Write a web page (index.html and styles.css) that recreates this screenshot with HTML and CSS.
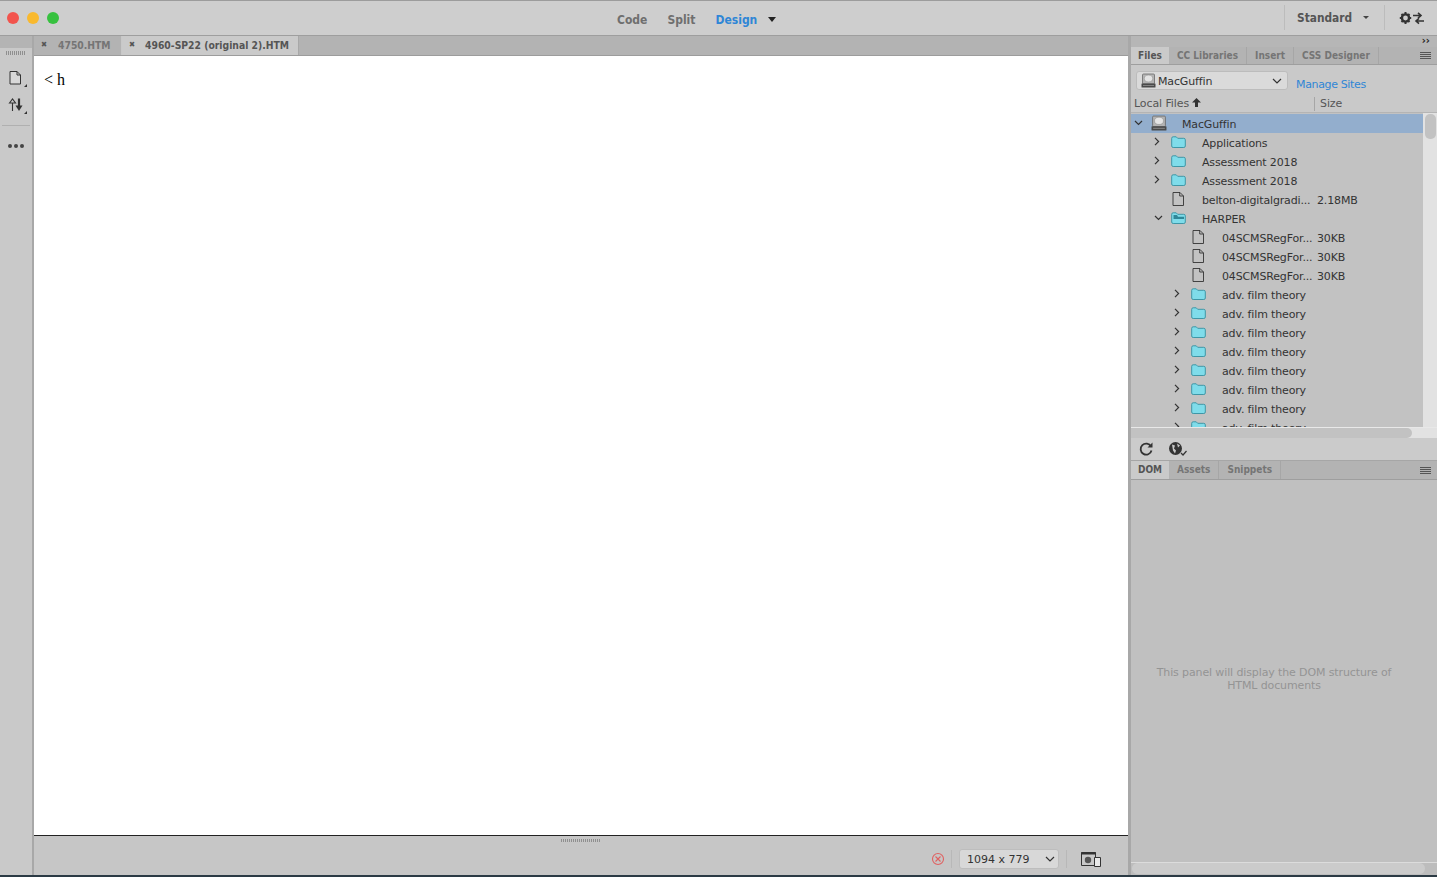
FILE: index.html
```html
<!DOCTYPE html>
<html lang="en">
<head>
<meta charset="utf-8">
<title>Dreamweaver</title>
<link rel="stylesheet" href="styles.css">
</head>
<body>
<svg class="defs" width="0" height="0">
  <symbol id="chev-r" viewBox="0 0 6 9"><path d="M1 .8l3.600 3.700L1 8.200" fill="none" stroke="#333" stroke-width="1.200"/></symbol>
  <symbol id="chev-d" viewBox="0 0 9 6"><path d="M1 1l3.500 3.500L8 1" fill="none" stroke="#333" stroke-width="1.200"/></symbol>
  <symbol id="folder" viewBox="0 0 15 12"><path d="M.7 2.300Q.7 .8 2.200 .8h3L6.700 2.300h6Q14.300 2.300 14.300 3.800v6.200q0 1.500-1.500 1.500H2.200Q.7 11.500 .7 10z" fill="#7fdcea" stroke="#3f96a6"/></symbol>
  <symbol id="folder-open" viewBox="0 0 15 12"><path d="M.7 2.300Q.7 .8 2.200 .8h3L6.700 2.300h6Q14.300 2.300 14.300 3.800v6.200q0 1.500-1.500 1.500H2.200Q.7 11.500 .7 10z" fill="#7fdcea" stroke="#3f96a6"/><path d="M2.500 3h3.500l1 1.700h6V7H2.500z" fill="#2f8798"/></symbol>
  <symbol id="doc" viewBox="0 0 13 14"><path d="M1 .5h7l3.500 3.500v9.500H1z" fill="none" stroke="#333" stroke-width=".9"/><path d="M7.700 .5V4h3.800" fill="none" stroke="#333" stroke-width=".9"/></symbol>
  <symbol id="drive" viewBox="0 0 15 15"><rect x="1.500" y="1" width="12" height="10" rx="1" fill="#b4b4b4" stroke="#6a6a6a" stroke-width=".8"/><ellipse cx="7.500" cy="5.500" rx="4.200" ry="3.400" fill="#e4e4e4" stroke="#8a8a8a" stroke-width=".5"/><rect x=".5" y="10.500" width="14" height="4" rx=".5" fill="#4a4a4a"/><path d="M2 12.500h11" stroke="#aaa" stroke-width=".6"/></symbol>
</svg>
<div class="app">
  <header class="titlebar">
    <div class="lights"><span class="light red"></span><span class="light yellow"></span><span class="light green"></span></div>
    <nav class="views">
      <span class="view">Code</span>
      <span class="view">Split</span>
      <span class="view active">Design</span>
      <span class="caret-down"></span>
    </nav>
    <div class="workspace">
      <span class="ws-label">Standard</span>
      <span class="ws-caret"></span>
    </div>
    <div class="ws-sync">
      <svg width="26" height="14" viewBox="0 0 26 14"><circle cx="6.500" cy="7" r="3.600" fill="none" stroke="#333" stroke-width="2.400"/><path d="M6.500 1v2.500M6.500 10.500V13M.8 7h2.500M9.700 7h2.500M2.500 3l1.700 1.700M8.800 9.300l1.700 1.700M2.500 11l1.700-1.700M8.800 4.700L10.500 3" stroke="#333" stroke-width="2"/><path d="M14 4.500h7.500M19 1.800l3 2.700-3 2.700" fill="none" stroke="#333" stroke-width="1.600"/><path d="M25 10h-7M20 7.300l-3 2.700 3 2.700" fill="none" stroke="#333" stroke-width="1.600"/></svg>
    </div>
  </header>
  <div class="main">
    <aside class="toolbar">
      <div class="toolbar-top"></div>
      <div class="grip"></div>
      <div class="tool tool-file">
        <svg width="13" height="14" viewBox="0 0 13 14"><path d="M1 .5h7l3.500 3.500v9H1z" fill="#d8d8d8" stroke="#333"/><path d="M8 .5V4h3.500" fill="none" stroke="#333"/></svg>
        <span class="corner"></span>
      </div>
      <div class="tool tool-arrows">
        <svg width="16" height="16" viewBox="0 0 16 16"><path d="M4.500 14V5.500M1.500 6l3-4 3 4z" fill="none" stroke="#333" stroke-width="1.100"/><path d="M11 1.500V9" stroke="#333" stroke-width="2.200"/><path d="M7.500 8.500h7L11 14z" fill="#333"/></svg>
        <span class="corner"></span>
      </div>
      <div class="tool-sep"></div>
      <div class="tool tool-more"><i class="dot"></i><i class="dot"></i><i class="dot"></i></div>
    </aside>
    <section class="doc-area">
      <div class="tabs">
        <div class="tab"><span class="tab-x">✖</span>4750.HTM</div>
        <div class="tab current"><span class="tab-x">✖</span>4960-SP22 (original 2).HTM</div>
      </div>
      <div class="page"><p class="page-text">&lt; h</p></div>
      <div class="statusbar">
        <div class="status-grip"></div>
        <svg class="err" width="14" height="14" viewBox="0 0 14 14"><circle cx="7" cy="7" r="5.500" fill="none" stroke="#e06060" stroke-width="1.100"/><path d="M4.500 4.500l5 5M9.500 4.500l-5 5" stroke="#e06060" stroke-width="1.100"/></svg>
        <span class="status-sep"></span>
        <div class="size-select"><span>1094 x 779</span><svg width="10" height="6" viewBox="0 0 10 6"><path d="M1 1l4 4 4-4" fill="none" stroke="#333" stroke-width="1.200"/></svg></div>
        <span class="status-sep"></span>
        <svg class="preview" width="20" height="16" viewBox="0 0 20 16"><path d="M.5 1.500h14v13H.5z" fill="#c8c8c8" stroke="#333"/><path d="M.5 1h14v2.500H.5z" fill="#333"/><circle cx="7" cy="9" r="3.200" fill="#555"/><path d="M13.500 6.500h6v9h-6z" fill="#e8e8e8" stroke="#333"/></svg>
      </div>
    </section>
    <aside class="panels">
      <div class="collapse-bar"><span class="chev">››</span></div>
      <div class="panel-tabs">
        <span class="ptab current files-tab">Files</span>
        <span class="ptab">CC Libraries</span>
        <span class="ptab">Insert</span>
        <span class="ptab">CSS Designer</span>
        <span class="menu-lines"><i></i><i></i><i></i><i></i></span>
      </div>
      <div class="site-row">
        <div class="site-select">
          <svg class="drive" width="15" height="15"><use href="#drive"/></svg>
          <span class="site-name">MacGuffin</span>
          <svg class="site-chev" width="10" height="6" viewBox="0 0 10 6"><path d="M1 1l4 4 4-4" fill="none" stroke="#333" stroke-width="1.200"/></svg>
        </div>
        <a class="manage">Manage Sites</a>
      </div>
      <div class="file-head">
        <span class="col-local">Local Files <svg class="up" width="9" height="9" viewBox="0 0 9 9"><path d="M4.500 0L9 4.500H6V9H3V4.500H0z" fill="#333"/></svg></span>
        <span class="col-size">Size</span>
      </div>
      <div class="tree-wrap">
        <div class="tree">
          <div class="row level-0 selected"><span class="arrow"><svg width="9" height="6"><use href="#chev-d"/></svg></span><span class="icon"><svg class="drive-big" width="16" height="16"><use href="#drive"/></svg></span><span class="name">MacGuffin</span></div>
          <div class="row level-1"><span class="arrow"><svg width="6" height="9"><use href="#chev-r"/></svg></span><span class="icon"><svg width="15" height="12"><use href="#folder"/></svg></span><span class="name">Applications</span></div>
          <div class="row level-1"><span class="arrow"><svg width="6" height="9"><use href="#chev-r"/></svg></span><span class="icon"><svg width="15" height="12"><use href="#folder"/></svg></span><span class="name">Assessment 2018</span></div>
          <div class="row level-1"><span class="arrow"><svg width="6" height="9"><use href="#chev-r"/></svg></span><span class="icon"><svg width="15" height="12"><use href="#folder"/></svg></span><span class="name">Assessment 2018</span></div>
          <div class="row level-1"><span class="arrow"></span><span class="icon"><svg class="doc" width="13" height="14"><use href="#doc"/></svg></span><span class="name">belton-digitalgradi...</span><span class="size">2.18MB</span></div>
          <div class="row level-1"><span class="arrow"><svg class="open" width="9" height="6"><use href="#chev-d"/></svg></span><span class="icon"><svg width="15" height="12"><use href="#folder-open"/></svg></span><span class="name">HARPER</span></div>
          <div class="row level-2"><span class="arrow"></span><span class="icon"><svg class="doc" width="13" height="14"><use href="#doc"/></svg></span><span class="name">04SCMSRegFor...</span><span class="size">30KB</span></div>
          <div class="row level-2"><span class="arrow"></span><span class="icon"><svg class="doc" width="13" height="14"><use href="#doc"/></svg></span><span class="name">04SCMSRegFor...</span><span class="size">30KB</span></div>
          <div class="row level-2"><span class="arrow"></span><span class="icon"><svg class="doc" width="13" height="14"><use href="#doc"/></svg></span><span class="name">04SCMSRegFor...</span><span class="size">30KB</span></div>
          <div class="row level-2"><span class="arrow"><svg width="6" height="9"><use href="#chev-r"/></svg></span><span class="icon"><svg width="15" height="12"><use href="#folder"/></svg></span><span class="name">adv. film theory</span></div>
          <div class="row level-2"><span class="arrow"><svg width="6" height="9"><use href="#chev-r"/></svg></span><span class="icon"><svg width="15" height="12"><use href="#folder"/></svg></span><span class="name">adv. film theory</span></div>
          <div class="row level-2"><span class="arrow"><svg width="6" height="9"><use href="#chev-r"/></svg></span><span class="icon"><svg width="15" height="12"><use href="#folder"/></svg></span><span class="name">adv. film theory</span></div>
          <div class="row level-2"><span class="arrow"><svg width="6" height="9"><use href="#chev-r"/></svg></span><span class="icon"><svg width="15" height="12"><use href="#folder"/></svg></span><span class="name">adv. film theory</span></div>
          <div class="row level-2"><span class="arrow"><svg width="6" height="9"><use href="#chev-r"/></svg></span><span class="icon"><svg width="15" height="12"><use href="#folder"/></svg></span><span class="name">adv. film theory</span></div>
          <div class="row level-2"><span class="arrow"><svg width="6" height="9"><use href="#chev-r"/></svg></span><span class="icon"><svg width="15" height="12"><use href="#folder"/></svg></span><span class="name">adv. film theory</span></div>
          <div class="row level-2"><span class="arrow"><svg width="6" height="9"><use href="#chev-r"/></svg></span><span class="icon"><svg width="15" height="12"><use href="#folder"/></svg></span><span class="name">adv. film theory</span></div>
          <div class="row level-2"><span class="arrow"><svg width="6" height="9"><use href="#chev-r"/></svg></span><span class="icon"><svg width="15" height="12"><use href="#folder"/></svg></span><span class="name">adv. film theory</span></div>
        </div>
        <div class="vscroll"><div class="vthumb"></div></div>
      </div>
      <div class="hscroll"><div class="hthumb"></div></div>
      <div class="files-foot">
        <svg width="16" height="16" viewBox="0 0 16 16"><path d="M13 5.500A5.500 5.500 0 1 0 13.500 9.500" fill="none" stroke="#333" stroke-width="1.800"/><path d="M14.500 1.500v5h-5z" fill="#333"/></svg>
        <svg width="20" height="16" viewBox="0 0 20 16"><circle cx="7.500" cy="7.500" r="6.500" fill="#333"/><path d="M4 3.500l3 1-1 3 2 2-1 3-2-3zM9 2.500l3 2-2 2z" fill="#c8c8c8"/><path d="M13 12l2 2 3.500-4" fill="none" stroke="#333" stroke-width="1.200"/></svg>
      </div>
      <div class="panel-tabs dom-tabs">
        <span class="ptab current dom-tab">DOM</span>
        <span class="ptab">Assets</span>
        <span class="ptab">Snippets</span>
        <span class="menu-lines"><i></i><i></i><i></i><i></i></span>
      </div>
      <div class="dom-body">
        <p class="dom-msg">This panel will display the DOM structure of HTML documents</p>
      </div>
      <div class="dom-scroll"><div class="dom-thumb"></div></div>
    </aside>
  </div>
</div>
</body>
</html>
```
FILE: styles.css
```css
* { box-sizing: border-box; }
html, body { margin: 0; height: 100%; overflow: hidden; }
body { font-family: "DejaVu Sans", sans-serif; font-size: 11px; color: #333; background: #2b3a44; }
.defs { position: absolute; }
.app { width: 1437px; height: 875px; display: flex; flex-direction: column; background: #c4c4c4; }

.titlebar { height: 36px; flex: none; display: flex; align-items: center; background: #cecece; border-top: 1px solid #9c9c9c; border-bottom: 1px solid #9e9e9e; }
.lights { display: flex; gap: 8px; margin-left: 7px; }
.light { width: 12px; height: 12px; border-radius: 50%; }
.red { background: #f2544d; }
.yellow { background: #f9b92e; }
.green { background: #37c13f; }
.views { display: flex; align-items: center; margin-left: 558px; margin-top: 3px; font-size: 12px; font-stretch: condensed; font-weight: 700; color: #6f6f6f; gap: 20px; }
.view { line-height: 16px; }
.active { color: #2f86d6; }
.caret-down { width: 0; height: 0; border: 4.500px solid transparent; border-top: 5px solid #222; border-bottom: 0; margin-left: -9px; }
.workspace { margin-left: auto; width: 101px; height: 25px; display: flex; align-items: center; border-left: 1px solid #bcbcbc; border-right: 1px solid #bcbcbc; padding-left: 12px; font-size: 11.800px; font-stretch: condensed; font-weight: 700; color: #555; margin-top: -1px; }
.ws-caret { width: 0; height: 0; border: 3px solid transparent; border-top: 3px solid #444; border-bottom: 0; margin-left: 11px; }
.ws-sync { width: 52px; padding-left: 14px; display: flex; }

.main { flex: 1; display: flex; min-height: 0; }
.toolbar { width: 34px; flex: none; background: #c9c9c9; border-right: 2px solid #a8a8a8; display: flex; flex-direction: column; align-items: center; }
.toolbar-top { height: 12px; width: 100%; background: #b4b4b4; }
.grip { width: 20px; height: 4px; margin-top: 3px; background: repeating-linear-gradient(90deg, #8f8f8f 0 1px, transparent 1px 2px); }
.tool { position: relative; display: flex; justify-content: center; align-items: center; width: 100%; }
.tool-file { margin-top: 13px; height: 20px; padding-right: 2px; }
.tool-arrows { margin-top: 7px; height: 20px; padding-right: 1px; }
.corner { position: absolute; right: 5px; bottom: 1px; width: 0; height: 0; border-left: 3px solid transparent; border-bottom: 3px solid #333; }
.tool-sep { width: 28px; height: 1px; background: #b0b0b0; margin-top: 10px; }
.tool-more { margin-top: 15px; height: 10px; gap: 2px; }
.dot { width: 4px; height: 4px; border-radius: 50%; background: #444; }

.doc-area { flex: 1; display: flex; flex-direction: column; min-width: 0; }
.tabs { height: 20px; flex: none; display: flex; background: #b3b3b3; border-bottom: 1px solid #9c9c9c; }
.tab { width: 88px; display: flex; align-items: center; padding: 0 0 1px 7px; font-size: 10.300px; font-stretch: condensed; font-weight: 700; color: #757575; border-right: 1px solid #c8c8c8; white-space: nowrap; }
.tab.current { width: 177px; background: #cacaca; color: #555; border-right-color: #a8a8a8; }
.tab-x { font-size: 8px; color: #555; width: 17px; line-height: 1; }
.tab.current .tab-x { width: 16px; }
.page { height: 780px; flex: none; background: #fff; border-bottom: 1px solid #222; padding: 15px 0 0 10px; }
.page-text { margin: 0; font-family: "Liberation Serif", serif; font-size: 16px; line-height: 18px; color: #000; }
.statusbar { flex: 1; background: #c6c6c6; display: flex; align-items: center; justify-content: flex-end; padding-right: 27px; position: relative; padding-top: 7px; }
.status-grip { position: absolute; top: 3px; left: 527px; width: 40px; height: 3px; background: repeating-linear-gradient(90deg, #8f8f8f 0 1px, transparent 1px 2px); }
.err { margin-right: 6px; }
.status-sep { width: 1px; height: 18px; background: #b8b8b8; }
.size-select { width: 100px; height: 20px; margin: 0 7px; background: #d8d8d8; border: 1px solid #bdbdbd; border-radius: 3px; display: flex; align-items: center; justify-content: space-between; padding: 0 3px 0 7px; font-size: 11px; color: #333; }
.preview { margin-left: 14px; }

.panels { width: 309px; flex: none; display: flex; flex-direction: column; background: #c3c3c3; border-left: 3px solid #a8a8a8; }
.collapse-bar { height: 11px; flex: none; background: #b6b6b6; display: flex; justify-content: flex-end; padding-right: 7px; font-size: 10px; line-height: 9px; font-weight: 700; color: #222; }
.panel-tabs { height: 18px; flex: none; display: flex; align-items: stretch; background: #b3b3b3; border-bottom: 1px solid #9e9e9e; font-size: 10px; font-stretch: condensed; font-weight: 700; color: #757575; }
.ptab { display: flex; align-items: center; padding: 0 8px 1px; border-right: 1px solid #a6a6a6; }
.ptab.current { background: #cacaca; color: #555; border-right: 0; }
.files-tab { width: 38px; justify-content: center; padding: 0 0 1px; }
.dom-tab { width: 38px; justify-content: center; padding: 0 0 2px; color: #444; }
.dom-tabs .ptab { padding-bottom: 2px; }
.menu-lines { margin-left: auto; width: 17px; display: flex; flex-direction: column; justify-content: center; gap: 1px; padding-right: 5px; }
.menu-lines i { display: block; height: 1px; width: 11px; background: #555; }
.site-row { height: 30px; flex: none; display: flex; padding: 6px 0 0 5px; background: #c9c9c9; }
.site-select { width: 152px; height: 19px; background: #dadada; border: 1px solid #bcbcbc; border-radius: 3px; display: flex; align-items: center; padding: 0 4px; font-size: 11px; letter-spacing: -.15px; color: #333; }
.site-name { margin-left: 2px; padding-top: 2px; }
.site-chev { margin-left: auto; margin-right: 1px; }
.manage { color: #2f86d6; font-size: 11px; letter-spacing: -.35px; margin: 7px 0 0 8px; }
.file-head { height: 17px; flex: none; display: flex; align-items: center; background: #c9c9c9; font-size: 11px; letter-spacing: -.1px; color: #555; }
.col-local { width: 184px; padding-left: 3px; height: 14px; line-height: 14px; border-right: 1px solid #a6a6a6; white-space: nowrap; }
.up { vertical-align: 0; }
.col-size { padding-left: 5px; }
.tree-wrap { height: 315px; flex: none; display: flex; overflow: hidden; border-top: 1px solid #b4b4b4; }
.tree { flex: 1; min-width: 0; padding-top: 1px; background: #c2c2c2; }
.row { height: 19px; display: flex; align-items: center; white-space: nowrap; color: #333; font-size: 11px; letter-spacing: -.15px; }
.row.selected { background: #93aecd; }
.arrow { width: 20px; flex: none; display: flex; padding-left: 3px; margin-top: -2px; }
.open { margin-top: 1px; }
.icon { width: 31px; flex: none; display: flex; margin-top: -2px; margin-left: 0; }
.doc { margin-left: 1px; }
.name { display: block; padding-top: 2px; }
.level-0 .name { width: 135px; }
.level-1 { padding-left: 20px; }
.level-1 .name { width: 115px; }
.level-2 { padding-left: 40px; }
.level-2 .name { width: 95px; }
.size { color: #333; padding-top: 2px; }
.vscroll { width: 14px; flex: none; background: #e2e2e2; padding: 1px 1px 0 2px; }
.vthumb { height: 25px; border-radius: 5px; background: #c2c2c2; }
.hscroll { height: 11px; flex: none; background: #e2e2e2; padding-right: 25px; border-top: 1px solid #e8e8e8; }
.hthumb { height: 100%; background: #c2c2c2; border-radius: 0 5px 5px 0; }
.files-foot { height: 22px; flex: none; display: flex; align-items: center; gap: 14px; padding-left: 7px; background: #cbcbcb; }
.dom-tabs { border-top: 1px solid #a6a6a6; height: 20px; }
.dom-body { flex: 1; min-height: 0; background: #c0c0c0; display: flex; align-items: center; justify-content: center; padding: 0 40px 0 20px; }
.dom-msg { margin: 16px 0 0; width: 250px; text-align: center; color: #949494; font-size: 11px; letter-spacing: -.12px; line-height: 13px; }
.dom-scroll { height: 13px; flex: none; background: #bdbdbd; border-top: 1px solid #dcdcdc; padding: 0 12px 1px 1px; }
.dom-thumb { height: 100%; background: #cbcbcb; border-radius: 6px; }
```
